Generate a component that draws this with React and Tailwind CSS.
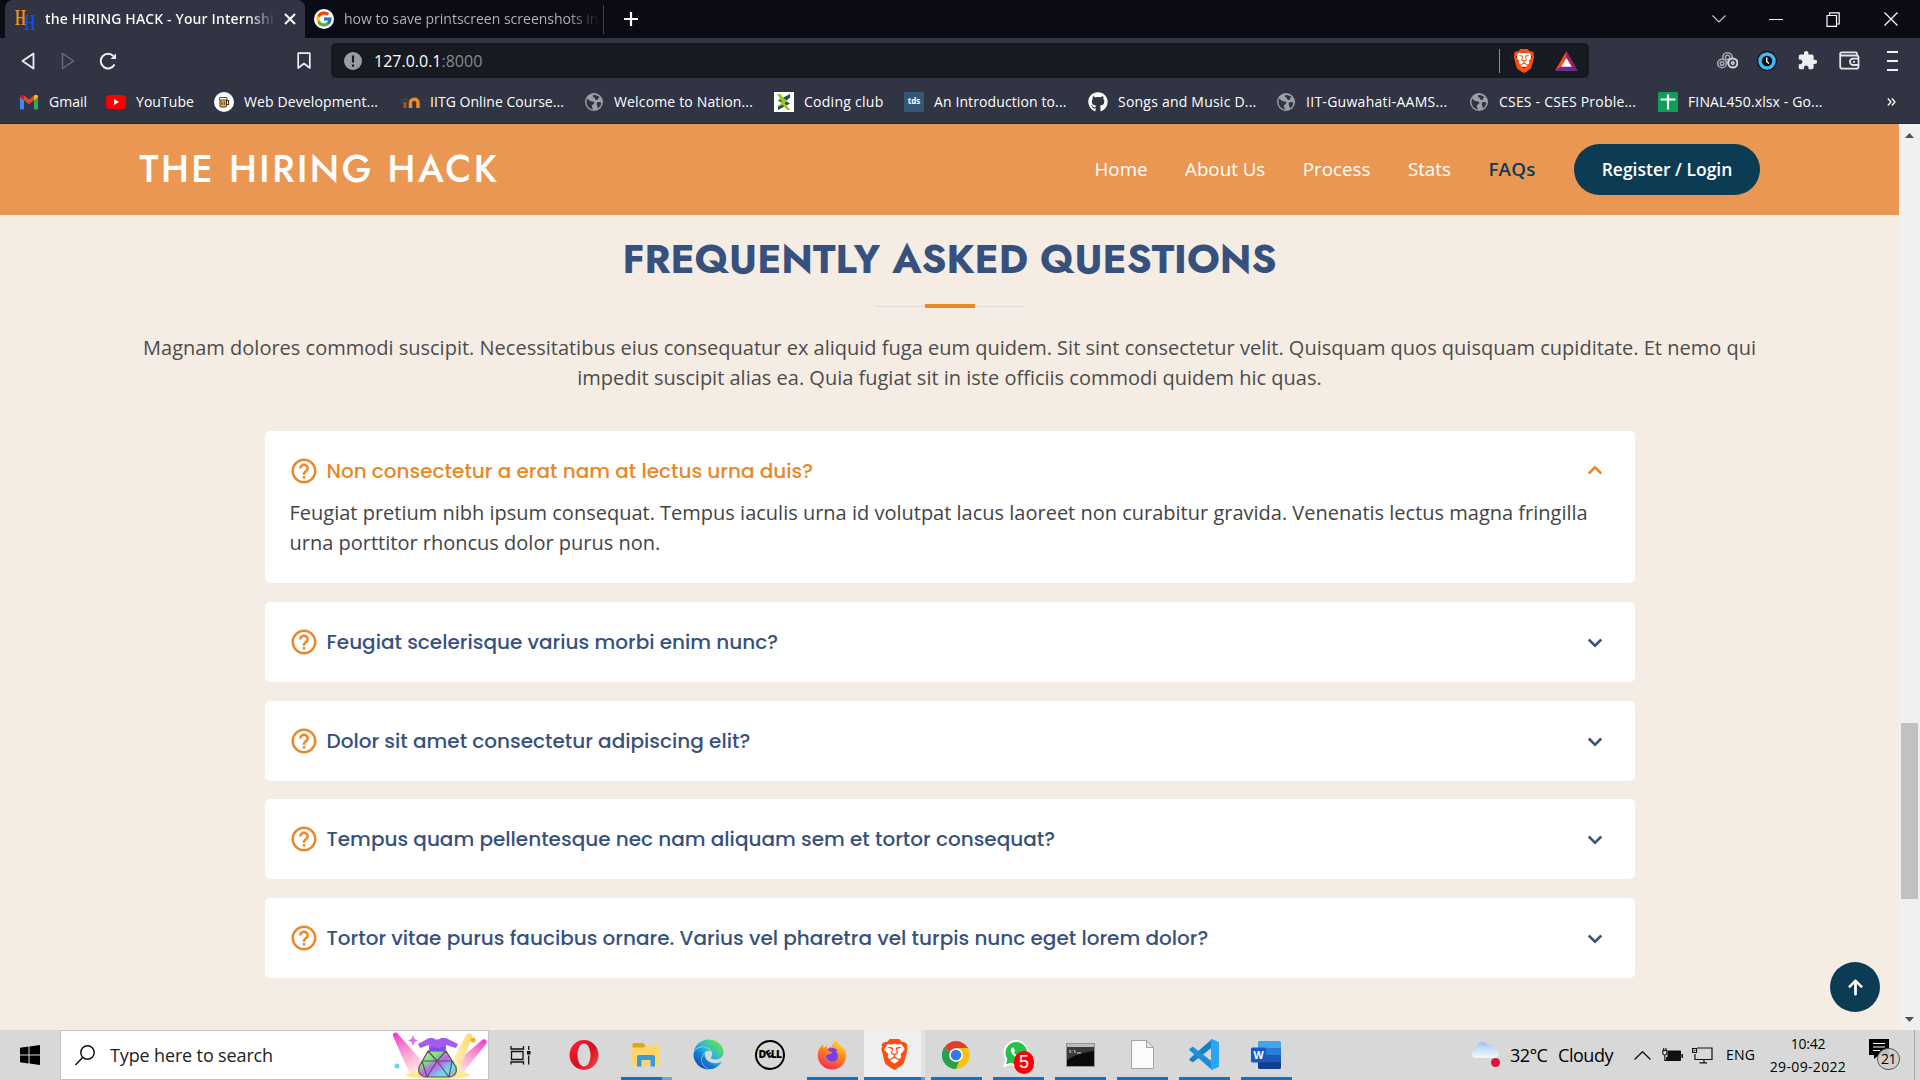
import React from "react";
import { BiHelpCircle, BiChevronDown, BiChevronUp } from "react-icons/bi";
import { BsArrowUpShort } from "react-icons/bs";
import { FcGoogle } from "react-icons/fc";
import { FaBrave } from "react-icons/fa6";
import { FaGithub, FaFirefoxBrowser, FaEdge } from "react-icons/fa";
import { MdExtension } from "react-icons/md";

/* ---------- Small icons ---------- */

const Globe = () => (
  <svg className="h-5 w-5" viewBox="0 0 20 20">
    <circle cx="10" cy="10" r="9" fill="#9aa0a6" />
    <path d="M3 6.500C5 8 6 9.500 8.500 9.500C11 9.500 10.500 12 9 12.500C7 13 8 16 9.500 17.500C5.500 17.300 2.500 14 2.500 10C2.500 8.700 2.600 7.500 3 6.500Z" fill="#303443" />
    <path d="M9 3.200C11 2.600 14 3.500 15.800 5.500C14.500 5 13.500 6.500 14.200 7.600C12.500 8.500 10.500 7.500 10.800 5.800C9.600 5.800 8.600 4.400 9 3.200Z" fill="#303443" />
    <path d="M13 10.500C14.500 9.500 16.500 10 17.300 11C17 13.500 15.500 15.600 13.800 16.400C14.200 14.500 12 13 13 10.500Z" fill="#303443" />
  </svg>
);

const Gmail = () => (
  <svg className="h-5 w-5" viewBox="0 0 20 20">
    <path d="M1 17V5L5 8V17.500H2C1.400 17.500 1 17.400 1 17Z" fill="#4285f4" />
    <path d="M15 17.500V8L19 5V17C19 17.400 18.600 17.500 18 17.500Z" fill="#34a853" />
    <path d="M5 8.300V3.600L10 7.600L15 3.600V8.300L10 12.300Z" fill="#ea4335" />
    <path d="M1 5C1 2.600 3.400 2.300 5 3.600V8.300L1 5.500Z" fill="#c5221f" />
    <path d="M19 5C19 2.600 16.600 2.300 15 3.600V8.300L19 5.500Z" fill="#fbbc04" />
  </svg>
);

const YouTube = () => (
  <svg className="h-5 w-5" viewBox="0 0 20 20">
    <rect x="0" y="3" width="20" height="14" rx="3.500" fill="#ff0000" />
    <path d="M8 7L13 10L8 13Z" fill="#fff" />
  </svg>
);

const Beer = () => (
  <svg className="h-5 w-5" viewBox="0 0 20 20">
    <circle cx="10" cy="10" r="10" fill="#fff" />
    <rect x="6" y="6" width="6.500" height="9" rx="1" fill="#efb73e" stroke="#3d3426" strokeWidth="1" />
    <path d="M5.500 5.500H13V8H5.500Z" fill="#fff6dd" stroke="#3d3426" strokeWidth=".8" />
    <path d="M12.500 8.500H14.500V12.500H12.500" fill="none" stroke="#3d3426" strokeWidth="1.200" />
    <path d="M8 9.500V13M10.300 9.500V13" stroke="#3d3426" strokeWidth=".9" />
  </svg>
);

const Moodle = () => (
  <svg className="h-5 w-5" viewBox="0 0 20 20">
    <path d="M0 8L5.500 5.500L9 7L3 9Z" fill="#4b4644" />
    <path d="M1.200 8V12" stroke="#4b4644" strokeWidth=".9" />
    <path d="M5 16V10" stroke="#8f5a2b" strokeWidth="3.400" fill="none" />
    <path d="M10.500 16V10.500C10.500 7.500 14.500 6.500 16.800 8C18 8.800 18 10 18 11V16" stroke="#f08a24" strokeWidth="3.500" fill="none" />
  </svg>
);

const CodingClub = () => (
  <svg className="h-5 w-5" viewBox="0 0 20 20">
    <rect width="20" height="20" fill="#fff" />
    <path d="M16 2L4 8.500L9 11.500L16 5.500Z" fill="#1f4e5a" />
    <path d="M4 18L16 11.500L11 8.500L4 14.500Z" fill="#1f4e5a" />
    <path d="M3 2H6.500L10 6.500L14 9L10.500 11L16.500 18H13L8.500 13L3.500 15L8 10Z" fill="#a4c520" />
  </svg>
);

const Tds = () => (
  <span className="flex h-5 w-5 items-center justify-center bg-[#355876] pb-0.5 text-[8px] leading-none font-bold tracking-normal text-white">tds</span>
);

const Sheets = () => (
  <svg className="h-5 w-5" viewBox="0 0 20 20">
    <rect width="20" height="20" rx="1.500" fill="#0f9d58" />
    <path d="M10 2.500V17.500M2.500 7.500H17.500" stroke="#fff" strokeWidth="2.200" />
  </svg>
);

const BraveLion = ({ className }) => (
  <span className={"relative flex items-center justify-center " + className}>
    <span className="absolute inset-x-[22%] top-[18%] bottom-[24%] bg-white" />
    <FaBrave className="relative h-full w-full text-[#fb4f14]" />
  </span>
);

/* ---------- Browser chrome ---------- */

const bookmarks = [
  { icon: <Gmail />, label: "Gmail", cls: "w-[87px]" },
  { icon: <YouTube />, label: "YouTube", cls: "w-[108px] tracking-[0.06px]" },
  { icon: <Beer />, label: "Web Development...", cls: "w-[186px] tracking-[0.12px]" },
  { icon: <Moodle />, label: "IITG Online Course...", cls: "w-[184px] tracking-[0.04px]" },
  { icon: <Globe />, label: "Welcome to Nation...", cls: "w-[190px] tracking-[0.16px]" },
  { icon: <CodingClub />, label: "Coding club", cls: "w-[130px] tracking-[0.27px]" },
  { icon: <Tds />, label: "An Introduction to...", cls: "w-[184px] tracking-[0.11px]" },
  { icon: <FaGithub className="h-5 w-5" />, label: "Songs and Music D...", cls: "w-[188px] tracking-[0.22px]" },
  { icon: <Globe />, label: "IIT-Guwahati-AAMS...", cls: "w-[193px] tracking-[0.28px]" },
  { icon: <Globe />, label: "CSES - CSES Proble...", cls: "w-[189px] tracking-[0.2px]" },
  { icon: <Sheets />, label: "FINAL450.xlsx - Go...", cls: "w-[180px] tracking-[0.13px]" },
];

function TabStrip() {
  return (
    <div className="flex h-[38px] bg-[#0b0b15] pl-[5px] text-white">
      <div className="flex h-full w-[300px] items-center rounded-t-lg bg-[#303443] pl-[10px]">
        <span className="relative h-[22px] w-5 font-['Liberation_Serif',serif] leading-none font-bold">
          <span className="absolute -top-[2px] left-0 origin-left scale-x-[0.62] text-[23px] text-[#f08a1c]">H</span>
          <span className="absolute top-[3px] left-[9px] origin-left scale-x-[0.62] text-[23px] text-[#0f4ff5]">H</span>
        </span>
        <span className="ml-[10px] w-[231px] overflow-hidden bg-gradient-to-r from-white from-88% to-[#303443] bg-clip-text text-sm font-semibold tracking-[0.125px] whitespace-nowrap text-transparent">
          the HIRING HACK - Your Internshi
        </span>
        <svg className="ml-[8px] h-[12px] w-[12px]" viewBox="0 0 12 12" stroke="#fff" strokeWidth="2">
          <path d="M1 1L11 11M11 1L1 11" />
        </svg>
      </div>
      <div className="flex h-full w-[299px] items-center pl-[9px]">
        <span className="flex h-5 w-5 items-center justify-center rounded-full bg-white">
          <FcGoogle className="h-[18px] w-[18px]" />
        </span>
        <span className="ml-[10px] w-[256px] overflow-hidden bg-gradient-to-r from-[#b6b6ba] from-88% to-[#0b0b15] bg-clip-text text-sm whitespace-nowrap text-transparent">
          how to save printscreen screenshots in
        </span>
        <span className="ml-auto h-[29px] w-px bg-[#43434d]" />
      </div>
      <svg className="mt-[12px] ml-[20px] h-[14px] w-[14px]" viewBox="0 0 14 14" stroke="#fff" strokeWidth="2.200">
        <path d="M7 0V14M0 7H14" />
      </svg>
      <div className="ml-auto flex items-center pr-[22px]">
        <svg className="h-[8px] w-[14px]" viewBox="0 0 14 8" fill="none" stroke="#c9c9cf" strokeWidth="1.100">
          <path d="M.5 .5L7 7L13.500 .5" />
        </svg>
        <span className="ml-[43px] h-px w-[14px] bg-white" />
        <svg className="ml-[43px] h-[15px] w-[14px]" viewBox="0 0 14 15" fill="none" stroke="#fff" strokeWidth="1.200">
          <path d="M1 3.500H10.500V14.400H1ZM3.500 3.500V.8H13.200V12H10.500" />
        </svg>
        <svg className="ml-[44px] h-[14px] w-[14px]" viewBox="0 0 14 14" stroke="#fff" strokeWidth="1.200">
          <path d="M.5 .5L13.500 13.500M13.500 .5L.5 13.500" />
        </svg>
      </div>
    </div>
  );
}

function Toolbar() {
  return (
    <div className="flex h-[45px] items-center text-white">
      <svg className="ml-[21px] h-[18px] w-[14px]" viewBox="0 0 14 18" fill="none" stroke="#f0f0f2" strokeWidth="1.800" strokeLinejoin="round">
        <path d="M12.500 1.500V16.500L1.500 9Z" />
      </svg>
      <svg className="ml-[26px] h-[18px] w-[14px]" viewBox="0 0 14 18" fill="none" stroke="#696c78" strokeWidth="1.500" strokeLinejoin="round">
        <path d="M1.500 1.500V16.500L12.500 9Z" />
      </svg>
      <svg className="ml-[24px] h-[18px] w-[18px]" viewBox="0 0 18 18" fill="none" stroke="#f0f0f2" strokeWidth="2">
        <path d="M15.500 12.500A7.300 7.300 0 1 1 14.500 4.200" />
        <path d="M17 1.500V7H11.500Z" fill="#f0f0f2" stroke="none" />
      </svg>
      <svg className="ml-[180px] h-[18px] w-[14px]" viewBox="0 0 14 18" fill="none" stroke="#f0f0f2" strokeWidth="1.700">
        <path d="M1.200 1.200H12.800V16L7 11.500L1.200 16Z" strokeLinejoin="round" />
      </svg>
      <div className="ml-[20px] flex h-[35px] w-[1258px] items-center rounded-[5px] bg-[#181a21]">
        <svg className="ml-[13px] h-[18px] w-[18px]" viewBox="0 0 18 18">
          <circle cx="9" cy="9" r="9" fill="#9a9ca5" />
          <path d="M9 3.500V10.500M9 12.500V14.700" stroke="#181a21" strokeWidth="2.200" />
        </svg>
        <span className="ml-[12px] text-base leading-none">
          127.0.0.1<span className="text-[#878a94]">:8000</span>
        </span>
        <span className="ml-auto h-[24px] w-px bg-[#8a8c92]" />
        <BraveLion className="ml-[12px] h-[24px] w-[24px]" />
        <svg className="mr-[11px] ml-[19px] h-[20px] w-[23px]" viewBox="0 0 23 20">
          <path d="M11.500 0V7.500L6.500 15.500L0 20Z" fill="#ff4724" />
          <path d="M11.500 0L23 20L16.500 15.500L11.500 7.500Z" fill="#9e1f63" />
          <path d="M0 20L6.500 15.500H16.500L23 20Z" fill="#662d91" />
          <path d="M11.500 7L16.800 15.800H6.200Z" fill="#fff" />
        </svg>
      </div>
      <svg className="ml-[128px] h-[19px] w-[21px]" viewBox="0 0 21 19" fill="none" stroke="#a9abb1" strokeWidth="1.500">
        <circle cx="10.500" cy="6.500" r="4.800" />
        <circle cx="10.500" cy="6.500" r="2.200" />
        <circle cx="5" cy="12.500" r="4.300" fill="#303443" />
        <circle cx="5" cy="12.500" r="1.800" />
        <circle cx="15.800" cy="12" r="4.600" fill="#303443" stroke="#d4d5d9" strokeWidth="2" />
        <circle cx="15.800" cy="12" r="1.300" stroke="#d4d5d9" />
      </svg>
      <svg className="ml-[19px] h-[22px] w-[20px]" viewBox="0 0 20 20">
        <circle cx="10" cy="10" r="10" fill="#0d0e12" />
        <circle cx="10" cy="10" r="7" fill="#0d0e12" stroke="#45b5f2" strokeWidth="3.600" />
        <path d="M9.700 6.500V10.500L12 12.500" stroke="#fff" strokeWidth="1.400" fill="none" />
      </svg>
      <MdExtension className="ml-[20px] h-[21px] w-[21px] text-[#efeff1]" />
      <svg className="ml-[21px] h-[19px] w-[21px]" viewBox="0 0 21 19" fill="none" stroke="#e6e6e9" strokeWidth="1.800">
        <path d="M18.500 4.500H3C.5 4.500 .5 1.300 3 1.300H16.500Q18 1.300 18 3V4.500M1.200 3V15.500C1.200 17 2 17.700 3.500 17.700H17.500C19 17.700 19.500 17 19.500 15.500V6.500C19.500 5.500 19 4.500 17.500 4.500" />
        <path d="M19.500 7.700H14.500C9.800 7.700 9.800 14 14.500 14H19.500" />
        <path d="M14 10.900H16" />
      </svg>
      <span className="ml-[27px] flex h-[20px] w-[11px] flex-col justify-between">
        <span className="h-[2px] bg-[#f0f0f2]" />
        <span className="h-[2px] bg-[#f0f0f2]" />
        <span className="h-[2px] bg-[#f0f0f2]" />
      </span>
    </div>
  );
}

function Bookmarks() {
  return (
    <div className="flex h-[41px] items-center border-b border-[#262935] pb-[3px] pl-[19px] text-sm text-white">
      {bookmarks.map((b) => (
        <span key={b.label} className={"flex shrink-0 items-center gap-[10px] whitespace-nowrap " + b.cls}>
          {b.icon}
          <span>{b.label}</span>
        </span>
      ))}
      <svg className="ml-[49px] h-[8px] w-[9px]" viewBox="0 0 9 8" fill="none" stroke="#fff" strokeWidth="1.300">
        <path d="M.8 .5L4 4L.8 7.500M4.800 .5L8 4L4.800 7.500" />
      </svg>
    </div>
  );
}

/* ---------- Page ---------- */

const faqs = [
  {
    q: "Non consectetur a erat nam at lectus urna duis?",
    a: "Feugiat pretium nibh ipsum consequat. Tempus iaculis urna id volutpat lacus laoreet non curabitur gravida. Venenatis lectus magna fringilla urna porttitor rhoncus dolor purus non.",
  },
  { q: "Feugiat scelerisque varius morbi enim nunc?" },
  { q: "Dolor sit amet consectetur adipiscing elit?" },
  { q: "Tempus quam pellentesque nec nam aliquam sem et tortor consequat?" },
  { q: "Tortor vitae purus faucibus ornare. Varius vel pharetra vel turpis nunc eget lorem dolor?" },
];

function Header() {
  return (
    <header className="flex h-[91px] items-center bg-[#eb9754] pl-[139.5px] text-[18.75px] text-white">
      <h1 className="font-['Jost','Lato',sans-serif] text-[37.5px] leading-none font-medium tracking-[2.5px]">THE HIRING HACK</h1>
      <nav className="ml-auto flex items-center gap-[37.5px] pr-[139px] whitespace-nowrap">
        <a>Home</a>
        <a>About Us</a>
        <a>Process</a>
        <a>Stats</a>
        <a className="font-semibold tracking-[0.2px] text-[#0c3c53]">FAQs</a>
        <a className="ml-px flex h-[51px] w-[186px] items-center justify-center rounded-full bg-[#0c3c53] text-[17.5px] font-semibold">Register / Login</a>
      </nav>
    </header>
  );
}

function FaqCard({ q, a }) {
  return (
    <li className="rounded-[5px] bg-white p-[25px]">
      <div className={"-ml-[0.5px] flex h-[30px] items-center font-['Poppins','Inter',sans-serif] text-xl font-medium " + (a ? "text-[#ea8727]" : "text-[#37517e]")}>
        <BiHelpCircle className="h-[30px] w-[30px] text-[#ea8727]" />
        <span className="ml-[7.5px]">{q}</span>
        {a ? <BiChevronUp className="ml-auto h-[30px] w-[30px]" /> : <BiChevronDown className="ml-auto h-[30px] w-[30px]" />}
      </div>
      {a && <p className="pt-[12px] text-xl leading-[30px] text-[#444]">{a}</p>}
    </li>
  );
}

function Page() {
  return (
    <div className="flex h-[906px]">
      <div className="relative flex w-[1899px] flex-col bg-[#f5ece3]">
        <Header />
        <main className="flex flex-col items-center pt-[20px]">
          <h2 className="font-['Jost','Lato',sans-serif] text-[40px] leading-[48px] font-bold text-[#37517e]">FREQUENTLY ASKED QUESTIONS</h2>
          <div className="mt-[21px] flex h-[4px] w-[150px] items-center justify-center">
            <span className="h-px flex-1 bg-[#ddd]" />
            <span className="h-[4px] w-[50px] bg-[#ea8727]" />
            <span className="h-px flex-1 bg-[#ddd]" />
          </div>
          <p className="mt-[25px] w-[1625px] text-center text-xl leading-[30px] text-[#4c4c4c]">
            Magnam dolores commodi suscipit. Necessitatibus eius consequatur ex aliquid fuga eum quidem. Sit sint consectetur velit. Quisquam quos quisquam cupiditate. Et nemo qui impedit suscipit alias ea. Quia fugiat sit in iste officiis commodi quidem hic quas.
          </p>
          <ul className="mt-[38px] flex w-[1370px] flex-col gap-[18.75px]">
            {faqs.map((f) => (
              <FaqCard key={f.q} {...f} />
            ))}
          </ul>
        </main>
        <button className="absolute right-[19px] bottom-[18px] flex h-[50px] w-[50px] items-center justify-center rounded-full bg-[#0c3c53]">
          <BsArrowUpShort className="h-[31px] w-[31px] stroke-[0.4] text-white" />
        </button>
      </div>
      <div className="flex w-[21px] flex-col items-center bg-[#f0f0f0]">
        <svg className="mt-[9px] h-[5px] w-[9px]" viewBox="0 0 9 5" fill="#505050">
          <path d="M0 5L4.500 0L9 5Z" />
        </svg>
        <span className="mt-[585px] h-[176px] w-[17px] bg-[#c1c1c1]" />
        <svg className="mt-auto mb-[8px] h-[5px] w-[9px]" viewBox="0 0 9 5" fill="#505050">
          <path d="M0 0L4.500 5L9 0Z" />
        </svg>
      </div>
    </div>
  );
}

/* ---------- Taskbar ---------- */

const SearchArt = () => (
  <svg className="ml-auto h-[47px] w-[96px]" viewBox="0 0 96 47">
    <defs>
      <linearGradient id="beamPink" x1="0" y1="0" x2=".5" y2="1">
        <stop offset="0" stopColor="#f22fd0" />
        <stop offset="1" stopColor="#ffd9cf" stopOpacity=".7" />
      </linearGradient>
      <linearGradient id="beamPinkR" x1="1" y1="0" x2=".3" y2="1">
        <stop offset="0" stopColor="#f22fd0" />
        <stop offset="1" stopColor="#ffe0c8" stopOpacity=".7" />
      </linearGradient>
      <linearGradient id="beamGold" x1="1" y1="0" x2=".3" y2="1">
        <stop offset="0" stopColor="#ffd766" />
        <stop offset="1" stopColor="#fff3b8" stopOpacity=".8" />
      </linearGradient>
      <linearGradient id="skirt" x1="0" y1="0" x2="1" y2="1">
        <stop offset="0" stopColor="#f0e34e" />
        <stop offset=".3" stopColor="#7be58a" />
        <stop offset=".5" stopColor="#c85cf0" />
        <stop offset=".75" stopColor="#5fe3ea" />
        <stop offset="1" stopColor="#f28ac0" />
      </linearGradient>
    </defs>
    <ellipse cx="46" cy="43" rx="32" ry="4" fill="#ffea84" />
    <path d="M1 4C0 1 4 -1 6 2L36 36L18 42Z" fill="url(#beamPink)" />
    <path d="M94 12C96 9 93 6 90 8L58 36L70 42Z" fill="url(#beamPinkR)" />
    <path d="M80 5C81 1 76 0 74 3L56 38L66 42Z" fill="url(#beamGold)" />
    <path d="M36 19H54L64 35Q66 43 58 45H33Q25 43 27 35Z" fill="url(#skirt)" />
    <path d="M36 19H54L64 35Q66 43 58 45H33Q25 43 27 35ZM30 29H60M36 19L45 29L54 19M45 29L35 45M45 29L57 45M30 29L35 45M60 29L57 45" fill="none" stroke="#555" strokeWidth="1.200" />
    <path d="M37 6H41Q45 9 49 6H54L66 12L64 16L54 13V19H37V13L28 16L26 12Z" fill="#a45cf0" />
    <path d="M39 14Q45 18 53 14V19H38Z" fill="#7b4fe0" />
    <path d="M21 3L22.500 7L26 8.500L22.500 10L21 14L19.500 10L16 8.500L19.500 7Z" fill="#d96ff5" />
    <circle cx="81" cy="8" r="2.500" fill="#ffae1a" />
    <circle cx="5" cy="34" r="2.500" fill="#6fd3ea" />
  </svg>
);

const TaskView = () => (
  <svg className="h-[20px] w-[21px]" viewBox="0 0 21 20" fill="none" stroke="#111" strokeWidth="1.300">
    <path d="M1 1V4H13.500V1M1.500 6.500H13V14.500H1.500ZM1 19.500V17H13.500V19.500M18.700 1V5M18.700 10.500V19.500" />
    <path d="M17 6H20.500V9.500H17Z" fill="#111" stroke="none" />
  </svg>
);

const Opera = () => (
  <svg className="h-[30px] w-[30px]" viewBox="0 0 30 30">
    <defs>
      <linearGradient id="opera" x1="0" y1="0" x2="1" y2="1">
        <stop offset="0" stopColor="#ff2038" />
        <stop offset=".55" stopColor="#d8101f" />
        <stop offset="1" stopColor="#f8514f" />
      </linearGradient>
    </defs>
    <path fillRule="evenodd" d="M15 0A14.500 15 0 1 0 15 30A14.500 15 0 1 0 15 0ZM15 3.500C19 3.500 21.500 9 21.500 15C21.500 21 19 26.500 15 26.500C11 26.500 8.500 21 8.500 15C8.500 9 11 3.500 15 3.500Z" fill="url(#opera)" />
  </svg>
);

const Explorer = () => (
  <svg className="h-[24px] w-[28px]" viewBox="0 0 28 24">
    <path d="M.5 1.500C.5 .7 1 0 2 0H11L14 3V6H.5Z" fill="#e2a312" />
    <path d="M0 4.500H12L14.500 2H27C27.600 2 28 2.500 28 3V22H0Z" fill="#ffd768" />
    <path d="M5 23.500V14C5 12.800 6 12 7 12H21C22.200 12 23 12.800 23 14V23.500H18.500V17H9.500V23.500Z" fill="#3d97dc" />
  </svg>
);

const Edge = () => (
  <>
    <svg className="absolute h-0 w-0">
      <defs>
        <linearGradient id="edge" x1=".9" y1="0.2" x2=".2" y2="1">
          <stop offset="0" stopColor="#5de05a" />
          <stop offset=".4" stopColor="#2ab8d8" />
          <stop offset=".65" stopColor="#127ed6" />
          <stop offset="1" stopColor="#0c4fa0" />
        </linearGradient>
      </defs>
    </svg>
    <FaEdge className="h-[31px] w-[31px]" fill="url(#edge)" />
  </>
);

const Dell = () => (
  <span className="flex h-[30px] w-[30px] items-center justify-center rounded-full border-2 border-black text-[10.5px] leading-none font-extrabold tracking-[-0.7px] text-black">
    D<span className="inline-block -rotate-30">E</span>LL
  </span>
);

const Firefox = () => (
  <span className="relative flex h-[31px] w-[30px] items-center justify-center">
    <svg className="absolute h-0 w-0">
      <defs>
        <linearGradient id="firefox" x1=".8" y1="0" x2=".3" y2="1">
          <stop offset="0" stopColor="#ffe23d" />
          <stop offset=".45" stopColor="#ff8a1c" />
          <stop offset="1" stopColor="#f5295a" />
        </linearGradient>
      </defs>
    </svg>
    <span className="absolute top-[8px] left-[8px] h-[15px] w-[15px] rounded-full bg-[#7542e5]" />
    <FaFirefoxBrowser className="relative h-[30px] w-[30px]" fill="url(#firefox)" />
  </span>
);

const Chrome = () => (
  <svg className="h-[28px] w-[28px]" viewBox="0 0 28 28">
    <path d="M14 14L1.900 7A14 14 0 0 1 26.100 7Z" fill="#e33b2e" />
    <path d="M14 14L1.900 7A14 14 0 0 0 14 28Z" fill="#2b9f4b" />
    <path d="M14 14V28A14 14 0 0 0 26.100 7H14Z" fill="#fbc116" />
    <path d="M8.300 17L14 14L19.700 17L14 28Z" fill="#fbc116" />
    <path d="M1.900 7L8.200 17.500A6.800 6.800 0 0 0 17 20L14 28A14 14 0 0 1 1.900 7Z" fill="#2b9f4b" />
    <circle cx="14" cy="14" r="6.800" fill="#fff" />
    <circle cx="14" cy="14" r="5.300" fill="#2f7bea" />
  </svg>
);

const WhatsApp = () => (
  <span className="relative flex h-[30px] w-[30px] items-center justify-center">
    <svg className="absolute top-0 left-0 h-[27px] w-[27px]" viewBox="0 0 27 27">
      <path d="M13.500 0A13 13 0 0 0 2.300 19.500L0 27L7.300 25A13 13 0 1 0 13.500 0Z" fill="#fff" />
      <path d="M13.500 2A11 11 0 0 0 4.400 19.200L3 24.200L8 22.700A11 11 0 1 0 13.500 2Z" fill="#28c04c" />
      <path d="M9.500 7.500C7.500 8.500 7.500 11 9 13.300C11 16.500 13.500 18.700 17 19C19 19 20 17 19.500 16.200L16.800 14.800L15.500 16.300C13.500 15.600 12 14.200 11 12.300L12 11L10.900 7.700Z" fill="#fff" />
    </svg>
    <span className="absolute top-[11px] left-[11px] flex h-[23px] w-[20px] items-center justify-center rounded-full bg-[#fb0007] font-['Liberation_Sans',sans-serif] text-[18px] leading-none text-white">5</span>
  </span>
);

const Terminal = () => (
  <svg className="h-[24px] w-[29px]" viewBox="0 0 29 24">
    <rect x=".5" y=".5" width="28" height="23" fill="#0a0a0a" stroke="#8f959b" />
    <rect x="1" y="1" width="27" height="3" fill="#b9bec3" />
    <path d="M1 4H28V8C18 9 8 12 1 17Z" fill="#3a3a3a" />
    <path d="M4 7V10M6 7.500V8M6 9.500V10M8 7L9.500 10M11 10H15" stroke="#ddd" strokeWidth="1" />
  </svg>
);

const FilePage = () => (
  <svg className="h-[29px] w-[23px]" viewBox="0 0 23 29" fill="#fbfbfb" stroke="#a3a3a3">
    <path d="M.5 .5H15.500L22.500 7.500V28.500H.5Z" />
    <path d="M15.500 .5V7.500H22.500Z" fill="#e4e4e4" />
  </svg>
);

const VsCode = () => (
  <svg className="h-[31px] w-[31px]" viewBox="0 0 31 31">
    <path d="M23 0V8.500L4 23.200L.5 21.500V19.800Z" fill="#1a80c4" />
    <path d="M23 31V22.500L4 7.800L.5 9.500V11.200Z" fill="#1b8fd8" />
    <path d="M23 0L30 3.300V27.700L23 31L22 30V1Z" fill="#2aa6f2" />
  </svg>
);

const Word = () => (
  <svg className="h-[28px] w-[30px]" viewBox="0 0 30 28">
    <path d="M7 1.500C7 .7 7.600 0 8.500 0H28.500C29.400 0 30 .7 30 1.500V7H7Z" fill="#41a5ee" />
    <path d="M7 7H30V14H7Z" fill="#2b7cd3" />
    <path d="M7 14H30V21H7Z" fill="#185abd" />
    <path d="M7 21H30V26.500C30 27.400 29.400 28 28.500 28H8.500C7.600 28 7 27.400 7 26.500Z" fill="#103f91" />
    <rect x="0" y="6.500" width="15" height="15" rx="1.500" fill="#185abd" />
    <text x="7.500" y="18" textAnchor="middle" fontFamily="Open Sans, sans-serif" fontWeight="700" fontSize="10.500" fill="#fff">W</text>
  </svg>
);

const apps = [
  { name: "opera", icon: <Opera /> },
  { name: "explorer", icon: <Explorer />, open: "split" },
  { name: "edge", icon: <Edge /> },
  { name: "dell", icon: <Dell /> },
  { name: "firefox", icon: <Firefox />, open: "single" },
  { name: "brave", icon: <BraveLion className="h-[31px] w-[31px]" />, open: "active" },
  { name: "chrome", icon: <Chrome />, open: "single" },
  { name: "whatsapp", icon: <WhatsApp />, open: "single" },
  { name: "terminal", icon: <Terminal />, open: "single" },
  { name: "file", icon: <FilePage />, open: "single" },
  { name: "vscode", icon: <VsCode />, open: "single" },
  { name: "word", icon: <Word />, open: "single" },
];

const underlines = {
  single: <span className="h-[3px] w-[51px] bg-[#0377d6]" />,
  split: (
    <span className="flex h-[3px] w-[51px] bg-[#62a9e6]">
      <span className="w-[41px] bg-[#0377d6]" />
    </span>
  ),
  active: (
    <span className="flex h-[3px] w-[61px] bg-[#4f9fe0]">
      <span className="w-[57px] bg-[#0377d6]" />
    </span>
  ),
};

function Taskbar() {
  return (
    <div className="flex h-[50px] items-stretch bg-[#d8d8d8] text-black">
      <div className="flex w-[60px] items-center justify-center">
        <svg className="h-[20px] w-[20px]" viewBox="0 0 20 20">
          <path d="M0 2.800L8.500 1.600V9.500H0ZM9.500 1.400L20 0V9.500H9.500ZM0 10.500H8.500V18.400L0 17.200ZM9.500 10.500H20V20L9.500 18.600Z" />
        </svg>
      </div>
      <div className="flex w-[429px] items-center border border-[#c4c4c4] bg-white">
        <svg className="ml-[14px] h-[21px] w-[20px]" viewBox="0 0 20 21" fill="none" stroke="#111" strokeWidth="1.500">
          <circle cx="12.500" cy="7.500" r="6.700" />
          <path d="M7.800 12.300L.5 20" />
        </svg>
        <span className="ml-[15px] text-[18px] tracking-[-0.14px] text-[#222]">Type here to search</span>
        <SearchArt />
      </div>
      <div className="flex w-[64px] items-center justify-center pr-[2px]">
        <TaskView />
      </div>
      {apps.map((app) => (
        <div key={app.name} className="flex w-[62px] flex-col items-center">
          <div className={"flex w-[61px] flex-1 items-center justify-center pt-[2px] " + (app.open === "active" ? "border-r-4 border-[#e3e3e3] bg-[#efefef] pl-[4px]" : "")}>
            {app.icon}
          </div>
          {app.open ? underlines[app.open] : <span className="h-[3px]" />}
        </div>
      ))}
      <div className="ml-auto flex items-center">
        <span className="relative h-[28px] w-[30px]">
          <svg className="h-[18px] w-[28px]" viewBox="0 0 28 18">
            <defs>
              <linearGradient id="cloud" x1="0" y1="0" x2="0" y2="1">
                <stop offset="0" stopColor="#9dc0f2" />
                <stop offset=".5" stopColor="#cfe3f8" />
                <stop offset="1" stopColor="#f4f8fb" />
              </linearGradient>
            </defs>
            <path d="M5 17C-1 17 -1 10 4.500 9.500C4 2 13 -2 17 4C21 3 23.500 5.500 23 8.500C29 8.500 29.500 16 24 17Z" fill="url(#cloud)" />
          </svg>
          <span className="absolute top-[17px] left-[20px] h-[9px] w-[9px] rounded-full bg-[#e01235]" />
        </span>
        <span className="ml-[9px] w-[48px] text-[18px] tracking-[-0.6px]">32°C</span>
        <span className="w-[76px] text-[18px] tracking-[-0.45px]">Cloudy</span>
        <svg className="h-[9px] w-[17px]" viewBox="0 0 17 9" fill="none" stroke="#111" strokeWidth="1.300">
          <path d="M.5 8.500L8.500 .7L16.500 8.500" />
        </svg>
        <svg className="ml-[11px] h-[15px] w-[21px]" viewBox="0 0 21 15">
          <path d="M4.500 3H18.500V12.500H4.500Z" fill="#111" stroke="#111" />
          <path d="M19.500 6H21V10H19.500Z" fill="#111" />
          <rect x="0" y="0" width="5.500" height="9" fill="#d8d8d8" />
          <path d="M.8 2.500H4.800V5.500C4.800 7.500 .8 7.500 .8 5.500ZM1.700 0V2.500M4 0V2.500M2.800 7V12.500H5" fill="none" stroke="#111" strokeWidth="1.100" />
        </svg>
        <svg className="ml-[9px] h-[17px] w-[21px]" viewBox="0 0 21 17" fill="none" stroke="#111" strokeWidth="1.200">
          <path d="M5 1H20V12.500H3V7M12 12.500V15.500M7.500 15.800H15" />
          <path d="M.6 1.500H4.500V5.500H.6ZM2.500 3V4" />
        </svg>
        <span className="ml-[13px] w-[43px] text-sm tracking-[0.16px]">ENG</span>
        <span className="flex w-[78px] flex-col items-center text-sm leading-[23px] whitespace-nowrap">
          <span className="tracking-[-0.24px]">10:42</span>
          <span className="tracking-[0.34px]">29-09-2022</span>
        </span>
        <span className="relative ml-[22px] h-[32px] w-[32px]">
          <svg className="h-[23px] w-[21px]" viewBox="0 0 21 23">
            <path d="M0 0H20V16H10L5 20V16H0Z" fill="#000" />
            <path d="M4 4.500H16M4 8H16M4 11.500H11" stroke="#fff" strokeWidth="1.200" />
          </svg>
          <span className="absolute top-[9px] left-[8px] flex h-[22px] w-[23px] items-center justify-center rounded-full border border-[#555] bg-[#cfcfcf]/90 text-[14px] leading-none tracking-[-0.5px]">21</span>
        </span>
        <span className="ml-[13px] h-[50px] w-px bg-[#a8a8a8]" />
        <span className="w-[5px]" />
      </div>
    </div>
  );
}

export default function App() {
  return (
    <div className="flex h-[1080px] w-[1920px] flex-col overflow-hidden bg-[#303443] font-['Open_Sans',sans-serif]">
      <TabStrip />
      <Toolbar />
      <Bookmarks />
      <Page />
      <Taskbar />
    </div>
  );
}
